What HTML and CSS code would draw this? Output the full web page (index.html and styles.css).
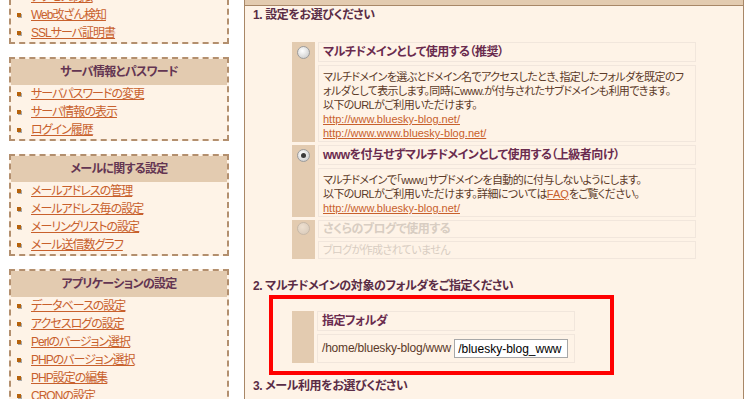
FILE: index.html
```html
<!DOCTYPE html>
<html lang="ja">
<head>
  <meta charset="UTF-8">
  <meta name="viewport" content="width=device-width, initial-scale=1.0">
  <title>マルチドメインの設定</title>
  <link rel="stylesheet" href="styles.css">
</head>
<body>
  <div class="layout">
    <aside class="sidebar">
      <div class="menu-box">
        <h3 class="menu-title">セキュリティ</h3>
        <ul class="menu-list">
          <li><a href="#">アクセス制限</a></li>
          <li><a href="#">Web改ざん検知</a></li>
          <li><a href="#">SSLサーバ証明書</a></li>
        </ul>
      </div>

      <div class="menu-box">
        <h3 class="menu-title">サーバ情報とパスワード</h3>
        <ul class="menu-list">
          <li><a href="#">サーバパスワードの変更</a></li>
          <li><a href="#">サーバ情報の表示</a></li>
          <li><a href="#">ログイン履歴</a></li>
        </ul>
      </div>

      <div class="menu-box">
        <h3 class="menu-title">メールに関する設定</h3>
        <ul class="menu-list">
          <li><a href="#">メールアドレスの管理</a></li>
          <li><a href="#">メールアドレス毎の設定</a></li>
          <li><a href="#">メーリングリストの設定</a></li>
          <li><a href="#">メール送信数グラフ</a></li>
        </ul>
      </div>

      <div class="menu-box">
        <h3 class="menu-title">アプリケーションの設定</h3>
        <ul class="menu-list">
          <li><a href="#">データベースの設定</a></li>
          <li><a href="#">アクセスログの設定</a></li>
          <li><a href="#">Perlのバージョン選択</a></li>
          <li><a href="#">PHPのバージョン選択</a></li>
          <li><a href="#">PHP設定の編集</a></li>
          <li><a href="#">CRONの設定</a></li>
        </ul>
      </div>
    </aside>

    <main class="panel">
      <div class="panel-head"></div>
      <div class="panel-body">
        <h4 class="step">1. 設定をお選びください</h4>

        <table class="option-table">
          <colgroup>
            <col class="col-radio">
            <col>
          </colgroup>
          <tr>
            <td class="radio-cell" rowspan="2"><span class="radio"></span></td>
            <td class="opt-title">マルチドメインとして使用する（推奨）</td>
          </tr>
          <tr>
            <td class="opt-text">
              マルチドメインを選ぶとドメイン名でアクセスしたとき、指定したフォルダを既定のフォルダとして表示します。同時にwww.が付与されたサブドメインも利用できます。<br>
              以下のURLがご利用いただけます。<br>
              <a href="#">http://www.bluesky-blog.net/</a><br>
              <a href="#">http://www.www.bluesky-blog.net/</a>
            </td>
          </tr>
          <tr>
            <td class="radio-cell" rowspan="2"><span class="radio checked"></span></td>
            <td class="opt-title">wwwを付与せずマルチドメインとして使用する（上級者向け）</td>
          </tr>
          <tr>
            <td class="opt-text">
              マルチドメインで「www」サブドメインを自動的に付与しないようにします。<br>
              以下のURLがご利用いただけます。詳細については<a href="#">FAQ</a>をご覧ください。<br>
              <a href="#">http://www.bluesky-blog.net/</a>
            </td>
          </tr>
          <tr class="disabled">
            <td class="radio-cell" rowspan="2"><span class="radio"></span></td>
            <td class="opt-title">さくらのブログで使用する</td>
          </tr>
          <tr class="disabled">
            <td class="opt-text">ブログが作成されていません</td>
          </tr>
        </table>

        <h4 class="step step-2">2. マルチドメインの対象のフォルダをご指定ください</h4>

        <div class="highlight">
          <table class="option-table folder-table">
            <colgroup>
              <col class="col-radio">
              <col>
            </colgroup>
            <tr>
              <td class="radio-cell" rowspan="2"></td>
              <td class="opt-title">指定フォルダ</td>
            </tr>
            <tr>
              <td class="folder-cell">
                /home/bluesky-blog/www <input class="folder-input" type="text" value="/bluesky-blog_www">
              </td>
            </tr>
          </table>
        </div>

        <h4 class="step step-3">3. メール利用をお選びください</h4>
      </div>
    </main>
  </div>
</body>
</html>
```

FILE: styles.css
```css
body {
  margin: 0;
  background: #fff;
  font-family: 'Liberation Sans', 'Noto Sans CJK JP', sans-serif;
  font-feature-settings: "palt";
  font-size: 12px;
  color: #5c3a28;
}

.layout {
  display: flex;
  align-items: flex-start;
  margin-top: -40px;
}

/* 左メニュー */
.sidebar {
  flex-shrink: 0;
  width: 220px;
  margin-left: 9px;
  margin-right: 15px;
}

.menu-box {
  border: 2px dashed #b38f6e;
  background: #fef3e7;
  margin-bottom: 13px;
}

.menu-title {
  margin: 0;
  height: 26px;
  line-height: 26px;
  background: #e3cbb0;
  text-align: center;
  font-size: 12px;
  font-weight: bold;
  letter-spacing: -0.7px;
  color: #633552;
}

.menu-list {
  list-style: none;
  margin: 0;
  padding: 0;
}

.menu-list li {
  position: relative;
  height: 18px;
  line-height: 18px;
  padding-left: 20px;
}

.menu-list li::before {
  content: '';
  position: absolute;
  left: 6px;
  top: 7px;
  width: 4px;
  height: 4px;
  background: #b5620c;
  box-shadow: 1px 1px 0 #a9a9a9;
}

.menu-list a {
  color: #c8602c;
  letter-spacing: -1px;
}

/* 右パネル */
.panel {
  flex-shrink: 0;
  width: 498px;
  border-left: 1px solid #a88767;
  border-right: 1px solid #a88767;
  background: #fef3e7;
  min-height: 460px;
  overflow: hidden;
}

.panel-head {
  height: 45px;
  background: #e3cbb0;
  border-bottom: 1px solid #a88767;
}

.panel-body {
  padding: 1px 8px 0;
}

.step {
  margin: 0;
  line-height: 16px;
  font-size: 12px;
  font-weight: bold;
  letter-spacing: -0.4px;
  color: #5a2c45;
}

.step-2 {
  margin-top: 16px;
}

.step-3 {
  margin-top: 3px;
}

.option-table {
  table-layout: fixed;
  border-collapse: separate;
  border-spacing: 3px;
  width: 410px;
  margin: 16px 0 0 36px;
}

.col-radio {
  width: 23px;
}

.option-table td {
  padding: 0;
}

.radio-cell {
  background: #e3cbb0;
  vertical-align: top;
}

.opt-title {
  height: 18px;
  line-height: 18px;
  padding: 0 4px !important;
  border: 1px solid #f1e6dc;
  font-size: 12px;
  font-weight: bold;
  letter-spacing: -0.5px;
  color: #6a2b4e;
  white-space: nowrap;
}

.opt-text {
  padding: 4px 4px 1px !important;
  border: 1px solid #f1e6dc;
  font-size: 11px;
  line-height: 14px;
  letter-spacing: -0.6px;
}

.opt-text a {
  color: #c8602c;
  letter-spacing: 0;
}

.radio {
  display: block;
  width: 11px;
  height: 11px;
  margin: 4px auto 0;
  border: 1px solid #9c9c9c;
  border-radius: 50%;
  background: radial-gradient(circle at 40% 35%, #ffffff, #d6d6d6 70%, #c4c4c4);
  position: relative;
}

.radio.checked::after {
  content: '';
  position: absolute;
  left: 3px;
  top: 3px;
  width: 5px;
  height: 5px;
  border-radius: 50%;
  background: #3a3a3a;
}

.disabled .opt-title,
.disabled .opt-text {
  color: #d8cdc2;
  height: 16px;
  line-height: 16px;
}

.disabled .opt-text {
  padding: 0 4px !important;
}

.disabled .radio {
  margin-top: 2px;
  opacity: 0.4;
}

/* フォルダ指定 */
.highlight {
  width: 321px;
  margin: 1px 0 0 16px;
  padding: 9px 0 5px 16px;
  border: 4px solid #ff0000;
}

.highlight .folder-table {
  width: 289px;
  margin: 0;
}

.folder-table .col-radio {
  width: 22px;
}

.folder-cell {
  height: 27px;
  padding: 0 4px !important;
  border: 1px solid #f1e6dc;
  font-size: 12px;
  letter-spacing: -0.2px;
  white-space: nowrap;
}

.folder-input {
  box-sizing: border-box;
  width: 114px;
  height: 19px;
  margin-left: 0;
  padding: 0 3px;
  border: 1px solid #a8a8a8;
  font-family: 'Liberation Sans', sans-serif;
  font-size: 12px;
  color: #000;
  vertical-align: middle;
}
```
